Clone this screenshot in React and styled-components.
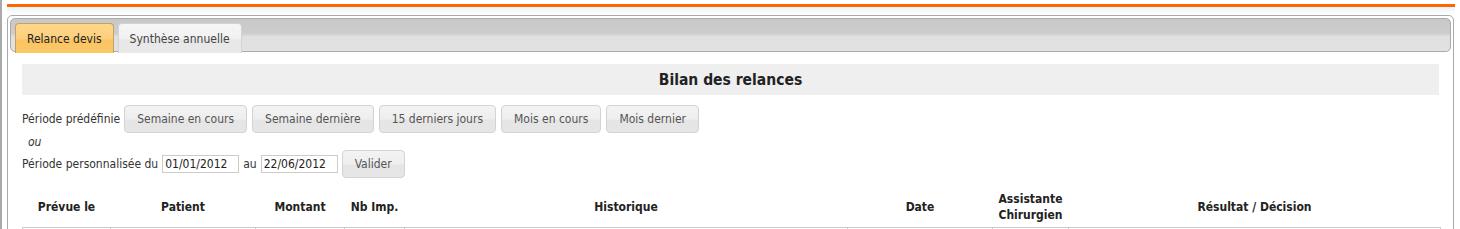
import React from "react";
import styled, { createGlobalStyle } from "styled-components";

const Global = createGlobalStyle`
  html, body { margin: 0; padding: 0; background: #fff; }
  body { font-family: "DejaVu Sans Condensed", "DejaVu Sans", Verdana, sans-serif; font-size: 12px; color: #333; }
  * { box-sizing: border-box; }
`;

const Page = styled.div`
  border-left: 2px solid #aaa;
  padding-left: 5px;
  padding-right: 5px;
  height: 229px;
  overflow: hidden;
`;

const TopBar = styled.div`
  margin-top: 4px;
  height: 3px;
  background: #ff6600;
`;

const Glow = styled.div`
  height: 8px;
  background: linear-gradient(#e6f3fa, #fff);
`;

const Panel = styled.div`
  border: 1px solid #aaa;
  border-radius: 5px;
  padding: 2px;
  margin-right: 1px;
`;

const TabBar = styled.div`
  display: flex;
  gap: 4px;
  height: 34px;
  padding: 4px 4px 0;
  border: 1px solid #aaa;
  border-radius: 5px;
  background: linear-gradient(#c8c8c8 0%, #cdcdcd 45%, #e0e0e0 55%, #e2e2e2 100%);
`;

const Tab = styled.div`
  height: 30px;
  margin-bottom: -1px;
  padding: 0 11px;
  display: flex;
  align-items: center;
  font-size: 12px;
  border: 1px solid ${(p) => (p.$active ? "#c8a060" : "#d3d3d3")};
  border-bottom: none;
  border-radius: 4px 4px 0 0;
  color: ${(p) => (p.$active ? "#222" : "#444")};
  background: ${(p) =>
    p.$active
      ? "linear-gradient(#ffd68a 0%, #fdd07e 50%, #fcc463 55%, #fbc868 100%)"
      : "linear-gradient(#f6f6f6 0%, #f1f1f1 50%, #e7e7e7 55%, #e9e9e9 100%)"};
`;

const Content = styled.div`
  padding: 12px 12px 0 12px;
`;

const Title = styled.div`
  height: 31px;
  background: #efefef;
  display: flex;
  align-items: center;
  justify-content: center;
  font-weight: bold;
  font-size: 15.5px;
  color: #222;
`;

const Row = styled.div`
  display: flex;
  align-items: center;
  gap: ${(p) => p.$gap || 5}px;
  margin-top: ${(p) => p.$mt || 0}px;
`;

const Label = styled.span`
  margin-right: ${(p) => p.$mr || 0}px;
  white-space: nowrap;
`;

const Button = styled.button`
  height: 28px;
  padding: 0 12px;
  font-family: inherit;
  font-size: 12px;
  color: #555;
  border: 1px solid #d3d3d3;
  border-radius: 4px;
  background: linear-gradient(#f3f3f3 0%, #eeeeee 50%, #e5e5e5 55%, #e6e6e6 100%);
  cursor: pointer;
`;

const Or = styled.div`
  font-style: italic;
  padding-left: 6px;
  margin-top: 2px;
  height: 15px;
  line-height: 15px;
`;

const DateInput = styled.input`
  width: 77px;
  height: 18px;
  border: 1px solid #ccc;
  padding: 0 2px;
  font-family: inherit;
  font-size: 12px;
  color: #222;
`;

const Table = styled.table`
  margin-top: 9px;
  width: 100%;
  border-collapse: collapse;
  table-layout: fixed;
`;

const Th = styled.th`
  font-weight: bold;
  font-size: 12px;
  color: #222;
  height: 40px;
  line-height: 16px;
  padding: 4px 2px;
  text-align: center;
  vertical-align: middle;
`;

const Td = styled.td`
  border: 1px solid #ccc;
  height: 24px;
`;

const cols = [
  ["Prévue le", 88],
  ["Patient", 145],
  ["Montant", 89],
  ["Nb Imp.", 60],
  ["Historique", 443],
  ["Date", 145],
  ["Assistante Chirurgien", 76],
  ["Résultat / Décision", 372],
];

const presets = ["Semaine en cours", "Semaine dernière", "15 derniers jours", "Mois en cours", "Mois dernier"];

export default function App() {
  return (
    <>
      <Global />
      <Page>
        <TopBar />
        <Glow />
        <Panel>
          <TabBar>
            <Tab $active>Relance devis</Tab>
            <Tab>Synthèse annuelle</Tab>
          </TabBar>
          <Content>
            <Title>Bilan des relances</Title>
            <Row $mt={10}>
              <Label $mr={-1}>Période prédéfinie</Label>
              {presets.map((p) => (
                <Button key={p}>{p}</Button>
              ))}
            </Row>
            <Or>ou</Or>
            <Row $gap={4}>
              <Label>Période personnalisée du</Label>
              <DateInput defaultValue="01/01/2012" />
              <Label>au</Label>
              <DateInput defaultValue="22/06/2012" />
              <Button>Valider</Button>
            </Row>
            <Table>
              <colgroup>
                {cols.map(([n, w]) => (
                  <col key={n} style={{ width: w }} />
                ))}
              </colgroup>
              <thead>
                <tr>
                  {cols.map(([n]) => (
                    <Th key={n}>
                      {n === "Assistante Chirurgien" ? (
                        <>
                          Assistante
                          <br />
                          Chirurgien
                        </>
                      ) : (
                        n
                      )}
                    </Th>
                  ))}
                </tr>
              </thead>
              <tbody>
                <tr>
                  {cols.map(([n]) => (
                    <Td key={n} />
                  ))}
                </tr>
              </tbody>
            </Table>
          </Content>
        </Panel>
      </Page>
    </>
  );
}
